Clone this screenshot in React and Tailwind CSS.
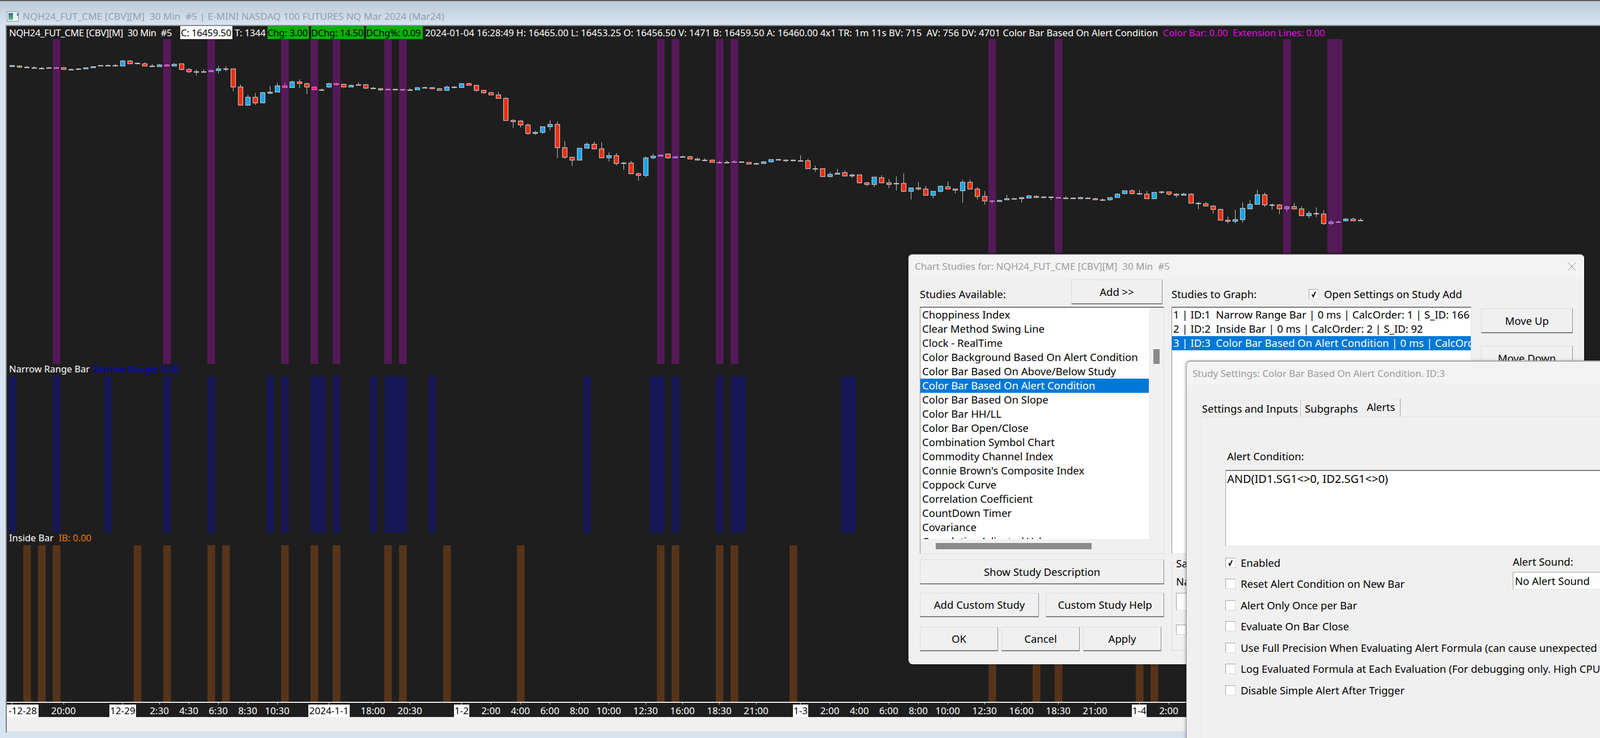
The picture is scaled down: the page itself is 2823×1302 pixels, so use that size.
import React from "react";

const FONT = "[font-family:'Open_Sans','Noto_Sans',sans-serif]";

// [bodyTop, bodyBottom, wickTop, wickBottom, type] in zoom units (1/3 px) relative to base
const A = [
[105,114,0,0,"b"],[108,117,105,120,"t"],[114,120,108,0,"g"],[117,123,111,0,"g"],[120,123,114,0,"g"],[117,123,114,0,"g"],[117,120,114,120,"l"],[117,129,114,0,"r"],[126,129,123,132,"g"],[123,129,120,0,"g"],
[117,126,0,0,"b"],[111,120,0,0,"b"],[105,111,0,0,"g"],[105,108,102,0,"g"],[105,111,99,0,"g"],[81,111,78,0,"b"],[81,99,78,0,"r"],[93,99,90,0,"g"],[96,111,90,0,"r"],[108,114,99,0,"g"],
[102,114,99,0,"b"],[102,111,99,0,"p"],[99,111,93,0,"b"],[96,129,0,132,"r"],[126,141,120,147,"r"],[138,141,129,159,"g"],[138,141,126,0,"g"],[132,141,129,0,"v"],[123,135,108,150,"b"],[123,126,111,138,"g"],
[123,222,0,243,"r"],[219,318,207,0,"r"],[273,318,261,321,"b"],[273,306,252,315,"r"],[249,306,246,0,"b"],[246,255,216,258,"b"],[213,249,198,0,"b"],[213,225,198,0,"p"],[192,225,186,0,"b"],[192,204,180,225,"r"],
[201,222,198,258,"r"],[219,237,216,0,"p"],[234,240,228,0,"g"],[201,222,198,225,"b"],[201,210,198,0,"p"],[204,222,0,0,"r"],[210,222,207,0,"b"],[207,213,195,0,"g"],[207,228,204,231,"r"],[225,231,219,0,"g"],
[228,237,225,243,"t"],[231,237,228,0,"l"],[231,237,0,240,"g"]];
const B = [
[172,178,171,180,"l"],[174,177,168,0,"g"],[163,177,160,0,"b"],[162,165,159,0,"g"],[162,171,0,0,"t"],[168,180,165,0,"r"],[159,180,153,0,"b"],[159,165,155,168,"g"],[141,165,0,0,"b"],[141,153,138,0,"r"],
[150,180,0,186,"r"],[177,192,0,198,"r"],[189,204,186,0,"r"],[201,222,186,0,"r"],[219,339,213,0,"r"],[336,345,330,378,"t"],[339,363,336,375,"r"],[360,408,354,414,"r"],[399,408,393,414,"b"],[369,402,0,408,"b"],
[357,372,336,390,"b"],[357,483,342,537,"r"],[480,534,447,540,"r"],[531,549,528,579,"r"],[483,549,0,0,"b"],[462,486,453,0,"b"],[462,489,450,492,"r"],[486,537,453,0,"r"],[522,537,507,555,"b"],[522,567,510,576,"r"],
[561,567,558,600,"g"],[561,621,552,0,"r"],[618,630,612,657,"t"],[534,630,528,639,"b"],[525,537,513,543,"b"],[519,528,0,0,"v"],[513,537,0,540,"r"],[528,537,0,0,"v"],[528,531,525,534,"g"],[528,543,525,0,"r"],
[540,549,534,0,"t"],[546,549,537,552,"g"],[546,561,543,0,"r"],[558,561,552,0,"l"],[558,561,549,0,"g"],[555,561,549,0,"l"],[555,561,0,0,"g"],[558,570,0,0,"r"],[564,570,561,573,"g"],[555,567,552,0,"b"],
[543,558,0,561,"b"],[543,549,540,0,"g"],[546,549,543,558,"g"],[546,552,543,555,"g"],[549,552,522,0,"g"],[549,594,540,0,"r"],[591,597,576,609,"g"],[591,636,0,0,"r"],[621,636,609,639,"b"],[615,624,594,0,"b"],
[612,633,603,0,"r"],[624,633,621,642,"b"],[624,669,0,672,"r"],[666,678,663,684,"t"],[636,678,0,690,"b"],[639,669,627,0,"r"],[666,678,648,696,"t"],[669,675,633,708,"g"],[669,714,618,717,"r"]];
const C = [
[243,264,0,306,"b"],[243,252,213,258,"t"],[249,285,234,0,"r"],[261,285,0,300,"b"],[234,264,0,270,"b"],[237,252,210,0,"r"],[249,258,0,273,"t"],[213,261,201,324,"b"],[213,252,201,0,"r"],[249,291,240,306,"r"],
[288,315,261,333,"r"],[312,318,309,327,"l"],[309,318,0,0,"b"],[300,309,282,0,"b"],[300,303,297,306,"g"],[294,303,0,321,"b"],[285,300,282,0,"b"],[288,297,282,0,"t"],[291,297,288,300,"g"],[291,297,0,309,"g"],
[294,300,0,0,"l"],[297,300,288,0,"g"],[297,303,294,0,"g"],[294,303,291,0,"b"],[297,303,294,0,"g"],[300,309,297,0,"t"],[306,309,300,0,"g"],[294,309,0,312,"b"],[276,297,273,0,"b"],[258,276,0,279,"b"],
[258,276,252,279,"r"],[273,279,255,0,"g"],[276,303,261,0,"r"],[267,303,0,0,"b"],[264,270,261,276,"g"],[264,279,0,285,"r"],[276,285,273,297,"t"],[276,285,270,0,"b"],[276,327,273,0,"r"],[324,330,318,357,"g"],
[327,342,318,0,"r"],[339,360,336,381,"r"],[357,417,354,0,"r"],[414,423,396,432,"t"],[411,423,360,432,"b"],[351,414,321,429,"b"],[330,357,309,0,"b"],[279,333,255,0,"b"],[279,336,270,345,"r"],[333,336,327,360,"g"],
[333,357,330,384,"r"],[342,357,339,372,"v"],[342,357,324,360,"r"],[354,393,342,0,"r"],[378,393,366,405,"b"],[378,384,348,399,"g"],[381,435,363,441,"r"],[423,435,414,441,"v"],[423,426,417,429,"l"],[408,420,402,423,"b"],
[408,420,402,0,"r"],[414,420,405,0,"g"]];

const STYLE = {
  b: { fill: "#0ea5f0", stroke: "#c4c4c4" },
  r: { fill: "#f52a08", stroke: "#c4c4c4" },
  t: { fill: "#f52a08", stroke: "#c4c4c4" },
  g: { fill: "#c4c4c4", stroke: "#c4c4c4" },
  p: { fill: "#ff1f5a", stroke: "#e070c0" },
  v: { fill: "#6f5be0", stroke: "#c77fd8" },
  l: { fill: "#c880c8", stroke: "#c880c8" },
};

const xOf = (i) => 21.5 + 13 * i - 12;
const candles = [
  ...A.map((c, k) => ({ c, i: k, base: 80 })),
  ...B.map((c, k) => ({ c, i: k + 53, base: 100 })),
  ...C.map((c, k) => ({ c, i: k + 122, base: 250 })),
];

const PURPLE = [6,21,27,37,41,44,51,53,88,90,96,98,133,142,173,179,180];
const BLUE = [0,6,13,21,27,35,37,41,42,44,49,51,52,53,57,78,87,88,90,96,98,99,113,114];
const BROWN = [2,4,6,17,21,27,29,37,41,44,51,53,59,69,88,90,96,98,106,133,139,142,153,155];

function Columns({ items, color, height }) {
  return (
    <svg className="block shrink-0" width="2811" height={height}>
      {items.map((i) => (
        <rect key={i} x={xOf(i) - 6.5} y="0" width="13.5" height={height} fill={color} />
      ))}
    </svg>
  );
}

function PricePane() {
  const top = 69;
  return (
    <svg className="block shrink-0" width="2811" height="573">
      {PURPLE.map((i) => (
        <rect key={i} x={xOf(i) - 6.5} y="0" width="13.5" height="573" fill="#541a58" />
      ))}
      {candles.map(({ c, i, base }) => {
        const [bt, bb, wt, wb, type] = c;
        const s = STYLE[type];
        const y = (z) => base + z / 3 - top;
        const x = xOf(i);
        return (
          <g key={i}>
            {(wt > 0 || wb > 0) && (
              <line x1={x} x2={x} y1={y(wt || bt)} y2={y(wb || bb)} stroke={s.stroke} strokeWidth="1" />
            )}
            <rect
              x={x - 4}
              y={y(bt) + 0.5}
              width="8"
              height={Math.max(1, y(bb) - y(bt) - 1)}
              fill={s.fill}
              stroke={s.stroke}
              strokeWidth="1.2"
            />
          </g>
        );
      })}
    </svg>
  );
}

const AXIS = [
  { x: 112, t: "20:00" },
  { x: 281, t: "2:30" },
  { x: 333, t: "4:30" },
  { x: 385, t: "6:30" },
  { x: 437, t: "8:30" },
  { x: 489, t: "10:30" },
  { x: 658, t: "18:00" },
  { x: 723, t: "20:30" },
  { x: 866, t: "2:00" },
  { x: 918, t: "4:00" },
  { x: 970, t: "6:00" },
  { x: 1022, t: "8:00" },
  { x: 1074, t: "10:00" },
  { x: 1139, t: "12:30" },
  { x: 1204, t: "16:00" },
  { x: 1269, t: "18:30" },
  { x: 1334, t: "21:00" },
  { x: 1464, t: "2:00" },
  { x: 1516, t: "4:00" },
  { x: 1568, t: "6:00" },
  { x: 1620, t: "8:00" },
  { x: 1672, t: "10:00" },
  { x: 1737, t: "12:30" },
  { x: 1802, t: "16:00" },
  { x: 1867, t: "18:30" },
  { x: 1932, t: "21:00" },
  { x: 2062, t: "2:00" },
];
const DATES = [
  { x: 12, w: 56, t: "-12-28", tick: 21 },
  { x: 193, w: 47, t: "12-29", tick: 216 },
  { x: 544, w: 73, t: "2024-1-1", tick: 580 },
  { x: 801, w: 27, t: "1-2", tick: 814 },
  { x: 1399, w: 27, t: "1-3", tick: 1412 },
  { x: 1997, w: 26, t: "1-4", tick: 2010 },
];

function TimeAxis() {
  return (
    <div className="relative h-[25px] shrink-0 overflow-hidden bg-[#1e1e1e] text-[17px] leading-[22px] text-white">
      {AXIS.map((a, k) => (
        <React.Fragment key={k}>
          <span className="absolute top-0 h-[3px] w-px bg-[#cfcfcf]" style={{ left: a.x - 12 }} />
          <span className="absolute top-[3px] w-[80px] text-center" style={{ left: a.x - 12 - 40 }}>{a.t}</span>
        </React.Fragment>
      ))}
      {DATES.map((d, k) => (
        <React.Fragment key={k}>
          <span className="absolute top-0 h-[3px] w-px bg-[#cfcfcf]" style={{ left: d.tick - 12 }} />
          <span className="absolute top-[3px] flex h-[22px] justify-center overflow-hidden whitespace-nowrap bg-white text-black" style={{ left: d.x - 12, width: d.w }}>{d.t}</span>
        </React.Fragment>
      ))}
    </div>
  );
}

function Header() {
  return (
    <div className="flex h-[23px] shrink-0 items-center whitespace-pre pl-[4px] text-[16.6px] leading-[23px] text-white">
      <span className="w-[302px] tracking-[-0.35px]">NQH24_FUT_CME [CBV][M]  30 Min  #5</span>
      <span className="w-[92px] bg-white px-[1px] tracking-[-0.1px] text-black">C: 16459.50</span>
      <span className="ml-[4px] w-[54px] tracking-[-0.2px]">T: 1344</span>
      <span className="ml-[4px] w-[73px] bg-[#00b300] tracking-[-0.2px] text-black">Chg: 3.00</span>
      <span className="ml-[4px] w-[93px] bg-[#00b300] tracking-[-0.2px] text-black">DChg: 14.50</span>
      <span className="ml-[4px] w-[100px] bg-[#00b300] tracking-[-0.2px] text-black">DChg%: 0.09</span>
      <span className="ml-[4px]">2024-01-04 16:28:49 H: 16465.00 L: 16453.25 O: 16456.50 V: 1471 B: 16459.50 A: 16460.00 4x1 TR: 1m 11s BV: 715  AV: 756 DV: 4701 Color Bar Based On Alert Condition  </span>
      <span className="text-[#ee00ee]">Color Bar: 0.00  Extension Lines: 0.00</span>
    </div>
  );
}

const BTN = "flex items-center justify-center border border-[#dcdcdc] border-b-2 border-r-[#8a8a8a] border-b-[#7f7f7f] bg-[#f0f0f0] text-[18.5px] text-black";

function Check({ on }) {
  return (
    <span className="flex h-[18px] w-[18px] shrink-0 items-center justify-center border border-[#d8d8d8] border-l-[#a0a0a0] border-t-[#a0a0a0] bg-white">
      {on && (
        <svg width="10" height="14" viewBox="0 0 10 14">
          <path d="M2 7.5 L4 11.5 L8 2.5" fill="none" stroke="#111" strokeWidth="2" />
        </svg>
      )}
    </span>
  );
}

const STUDIES = [
  "Choppiness Index",
  "Clear Method Swing Line",
  "Clock - RealTime",
  "Color Background Based On Alert Condition",
  "Color Bar Based On Above/Below Study",
  "Color Bar Based On Alert Condition",
  "Color Bar Based On Slope",
  "Color Bar HH/LL",
  "Color Bar Open/Close",
  "Combination Symbol Chart",
  "Commodity Channel Index",
  "Connie Brown's Composite Index",
  "Coppock Curve",
  "Correlation Coefficient",
  "CountDown Timer",
  "Covariance",
  "Cumulative Adjusted Value",
];

function StudiesDialog() {
  return (
    <div className="absolute left-[1602px] top-[447px] h-[725px] w-[1193px] overflow-hidden rounded-t-[8px] rounded-bl-[8px] border-t-2 border-l border-[#3c3c3c] bg-[#f0f0f0] text-[18.5px] leading-[24px] text-black shadow-[0_0_3px_#000]">
      <div className="flex h-[41px] items-center justify-between bg-[#f3f3f3] pl-[11px] pr-[14px] text-[17px] text-[#9b9b9b]">
        <span className="whitespace-pre">Chart Studies for: NQH24_FUT_CME [CBV][M]  30 Min  #5</span>
        <svg width="16" height="16" viewBox="0 0 16 16">
          <path d="M1 1 L15 15 M15 1 L1 15" stroke="#8a8a8a" strokeWidth="1" />
        </svg>
      </div>
      <div className="flex pl-[20px] pt-[3px]">
        <div className="w-[431px] shrink-0">
          <div className="flex h-[44px] justify-between">
            <span className="mt-[14px]">Studies Available:</span>
            <button className={BTN + " mr-[3px] w-[161px]"}>Add &gt;&gt;</button>
          </div>
          <div className="mt-[4px] h-[436px] border border-[#e3e3e3] border-l-[#8a8a8a] border-t-2 border-t-[#7a7a7a]">
            <div className="flex h-[408px]">
              <div className="h-full w-[403px] overflow-hidden bg-white">
                {STUDIES.map((s, i) => (
                  <div key={s} className={"h-[25px] whitespace-nowrap pl-[3px] leading-[23px] " + (i === 5 ? "bg-[#0078d7] text-white" : "")}>{s}</div>
                ))}
              </div>
              <div className="pl-[8px] pt-[73px]">
                <div className="h-[26px] w-[11px] bg-[#8a8a8a]" />
              </div>
            </div>
            <div className="pl-[27px] pt-[7px]">
              <div className="h-[11px] w-[275px] bg-[#8a8a8a]" />
            </div>
          </div>
          <button className={BTN + " mt-[10px] h-[44px] w-full"}>Show Study Description</button>
          <div className="mt-[15px] flex h-[43px] justify-between">
            <button className={BTN + " w-[210px]"}>Add Custom Study</button>
            <button className={BTN + " w-[209px]"}>Custom Study Help</button>
          </div>
          <div className="mt-[17px] flex h-[43px] gap-[6px]">
            <button className={BTN + " w-[138px]"}>OK</button>
            <button className={BTN + " w-[138px]"}>Cancel</button>
            <button className={BTN + " w-[138px]"}>Apply</button>
          </div>
        </div>
        <div className="ml-[13px] w-[529px] shrink-0">
          <div className="flex h-[48px] items-start">
            <span className="mt-[14px]">Studies to Graph:</span>
            <span className="ml-[92px] mt-[14px] flex items-center gap-[9px]">
              <Check on />
              <span className="whitespace-nowrap">Open Settings on Study Add</span>
            </span>
          </div>
          <div className="h-[436px] overflow-hidden border border-[#e3e3e3] border-l-[#8a8a8a] border-t-2 border-t-[#7a7a7a] bg-white whitespace-pre">
            <div className="h-[25px] pl-[2px] leading-[23px]">1 | ID:1  Narrow Range Bar | 0 ms | CalcOrder: 1 | S_ID: 166</div>
            <div className="h-[25px] pl-[2px] leading-[23px]">2 | ID:2  Inside Bar | 0 ms | CalcOrder: 2 | S_ID: 92</div>
            <div className="h-[25px] bg-[#0078d7] pl-[2px] leading-[23px] text-white">3 | ID:3  Color Bar Based On Alert Condition | 0 ms | CalcOrder: 3 | S_ID: 50</div>
          </div>
          <div className="mt-[16px] h-[155px] border border-[#d8d8d8] border-r-0 pl-[7px]">
            <div className="-mt-[12px] bg-[#f0f0f0]">Save Studies As Study Collection</div>
            <div className="mt-[8px]">Name:</div>
            <div className="mt-[8px] h-[31px] w-[200px] border border-[#e3e3e3] border-l-[#a0a0a0] border-t-[#a0a0a0] bg-white" />
            <div className="mt-[25px]"><Check /></div>
          </div>
        </div>
        <div className="ml-[17px] w-[162px] shrink-0 pt-[2px]">
          <div className="mt-[49px] flex flex-col gap-[22px]">
            <button className={BTN + " h-[44px]"}>Move Up</button>
            <button className={BTN + " h-[44px]"}>Move Down</button>
          </div>
        </div>
      </div>
    </div>
  );
}

const OPTIONS = [
  ["Enabled", true],
  ["Reset Alert Condition on New Bar"],
  ["Alert Only Once per Bar"],
  ["Evaluate On Bar Close"],
  ["Use Full Precision When Evaluating Alert Formula (can cause unexpected results)"],
  ["Log Evaluated Formula at Each Evaluation (For debugging only. High CPU usage)"],
  ["Disable Simple Alert After Trigger"],
];

function SettingsDialog() {
  return (
    <div className="absolute left-[2093px] top-[636px] h-[700px] w-[800px] overflow-hidden rounded-tl-[8px] border-t-2 border-l border-[#a8a8a8] bg-[#f0f0f0] text-[18.5px] leading-[24px] text-black shadow-[-2px_0_4px_rgba(0,0,0,0.25)]">
      <div className="flex h-[42px] items-center bg-[#f3f3f3] pl-[10px] text-[17px] text-[#9b9b9b]">
        Study Settings: Color Bar Based On Alert Condition. ID:3
      </div>
      <div className="pl-[23px] pt-[23px]">
        <div className="flex h-[32px] items-end">
          <div className="flex h-[29px] w-[178px] items-center justify-center whitespace-nowrap border-r border-[#bdbdbd] border-t border-t-[#e8e8e8]">Settings and Inputs</div>
          <div className="flex h-[29px] w-[108px] items-center justify-center border-t border-[#e8e8e8]">Subgraphs</div>
          <div className="flex h-[32px] w-[68px] items-center justify-center border-r border-[#9a9a9a] border-t border-t-[#e8e8e8] pb-[4px]">Alerts</div>
        </div>
        <div className="h-[700px] border-l border-t border-[#e4e4e4] pl-[44px] pt-[57px]">
          <div className="h-[25px] pl-[3px]">Alert Condition:</div>
          <div className="mt-[11px] h-[135px] border border-[#e3e3e3] border-l-[#a0a0a0] border-t-2 border-t-[#808080] bg-white pl-[2px] pt-[2px] text-[20px]">AND(ID1.SG1&lt;&gt;0, ID2.SG1&lt;&gt;0)</div>
          <div className="flex">
            <div className="flex w-[507px] shrink-0 flex-col gap-[12.5px] pt-[16px]">
              {OPTIONS.map(([t, on]) => (
                <div key={t} className="flex h-[25px] items-center gap-[9px] whitespace-nowrap">
                  <Check on={on} />
                  <span>{t}</span>
                </div>
              ))}
            </div>
            <div className="pt-[15px]">
              <div className="h-[24px]">Alert Sound:</div>
              <div className="mt-[6px] h-[31px] w-[200px] border border-[#e3e3e3] border-l-[#a0a0a0] border-t-[#a0a0a0] bg-white pl-[3px] leading-[29px]">No Alert Sound</div>
            </div>
          </div>
        </div>
      </div>
    </div>
  );
}

export default function App() {
  return (
    <div className={"relative h-[1302px] w-[2823px] overflow-hidden bg-[#d6e4f2] " + FONT}>
      <div className="flex h-[44px] items-center border-t-2 border-t-[#5a5a5a] bg-gradient-to-b from-[#bccbd9] to-[#d6e4f2] pl-[12px] pt-[12px]">
        <svg width="21" height="18" viewBox="0 0 21 18" className="shrink-0">
          <defs>
            <linearGradient id="ico" x1="0" y1="0" x2="0" y2="1">
              <stop offset="0" stopColor="#2a6f9f" />
              <stop offset="1" stopColor="#72b878" />
            </linearGradient>
          </defs>
          <rect x="0.5" y="0.5" width="20" height="17" fill="#eef2f4" stroke="#8a949c" />
          <rect x="3" y="3" width="8" height="12" fill="url(#ico)" />
          <rect x="18" y="3" width="2" height="5" fill="#2a7a7f" />
        </svg>
        <span className="ml-[7px] whitespace-pre text-[17.1px] text-[#939ea8]">NQH24_FUT_CME [CBV][M]  30 Min  #5 | E-MINI NASDAQ 100 FUTURES NQ Mar 2024 (Mar24)</span>
      </div>
      <div className="flex pl-[10px]">
        <div className="flex w-full flex-col border-l-2 border-t-2 border-l-[#7c7c7c] border-t-[#8a8a8a]">
          <div className="flex shrink-0 flex-col bg-[#1e1e1e]">
            <Header />
            <PricePane />
            <div className="flex h-[22px] shrink-0 items-center gap-[6px] pb-[4px] pl-[4px] text-[16.5px] text-white">
              <span>Narrow Range Bar</span>
              <span className="text-[#0000e0]">Narrow Range: 0.00</span>
            </div>
            <Columns items={BLUE} color="#171756" height={276} />
            <div className="flex h-[22px] shrink-0 items-center gap-[9px] pb-[4px] pl-[4px] text-[16.5px] text-white">
              <span>Inside Bar</span>
              <span className="text-[#f07800]">IB: 0.00</span>
            </div>
            <Columns items={BROWN} color="#56341a" height={276} />
            <div className="h-[2px] shrink-0 bg-[#e8e8e8]" />
          </div>
          <TimeAxis />
          <div className="h-[27px] shrink-0 border-b-2 border-[#e0e0e0] bg-[#f0f0f0]" />
        </div>
      </div>
      <StudiesDialog />
      <SettingsDialog />
    </div>
  );
}
